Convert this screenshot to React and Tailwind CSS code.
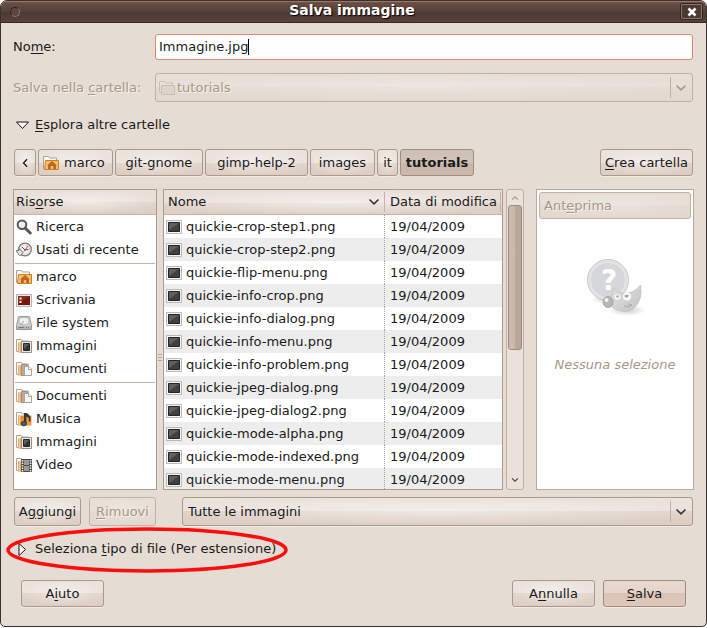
import React, { useState } from "react";

const raised =
  "rounded-[3px] border border-[#a89a8d] bg-[radial-gradient(ellipse_at_center,rgba(255,255,255,0.45),rgba(255,255,255,0)_75%),linear-gradient(#ebe2dc,#eae2dc_50%,#dfd4ca_50%,#ddcdc2)] shadow-[0_1px_0_#f1ebe5]";
const faded =
  "rounded-[3px] border border-[#bfb1a5] bg-[radial-gradient(ellipse_at_center,rgba(255,255,255,0.25),rgba(255,255,255,0)_75%),linear-gradient(#e7ded6,#e7dfd8_50%,#e3dad1_50%,#e2d8ce)] text-[#a89686] [text-shadow:1px_1px_0_#f6f2ee]";
const headerFill =
  "bg-[radial-gradient(ellipse_at_center,rgba(255,255,255,0.5),rgba(255,255,255,0)_75%),linear-gradient(#e9dfd9,#e8dfd9_50%,#e0d4cb_50%,#dccec3)]";

function Key({ children }) {
  return <span className="underline decoration-1 underline-offset-2">{children}</span>;
}

function Chevron({ className }) {
  return (
    <svg width="12" height="8" viewBox="0 0 12 8" className={className} fill="none" stroke="currentColor" strokeWidth="1.6">
      <path d="M1.500 1.500 6 5.800 10.500 1.500" />
    </svg>
  );
}

function FolderBase() {
  return (
    <>
      <path d="M.5 13.5V1.5H5.5L6.5 3H12.5V13.5Z" fill="#fbfaf8" stroke="#aaa6a0" />
      <path d="M2 4.500H12V14.500H2Z" fill="#e58f35" />
      <path d="M2.500 5H4.500V14H2.500Z" fill="#f8c98b" />
    </>
  );
}

function Icon({ name }) {
  return (
    <svg width="16" height="16" viewBox="0 0 16 16" className="shrink-0">
      {name === "search" && (
        <g fill="none" stroke="#555753">
          <circle cx="6" cy="5.8" r="4.3" fill="#eeeeec" strokeWidth="2" />
          <path d="M9.3 9.2 14.2 14" strokeWidth="3" strokeLinecap="round" />
          <path d="M3.6 5.5Q4 3.6 6 3.5" stroke="#fff" />
        </g>
      )}
      {name === "recent" && (
        <g fill="none">
          <circle cx="9" cy="7.5" r="6.3" fill="#f2f2f0" stroke="#77797a" strokeWidth="1.3" />
          <circle cx="9" cy="7.5" r="4.6" stroke="#b5b7b4" strokeDasharray="1 1.4" />
          <path d="M6 5 9 8 12.5 7.5" stroke="#555753" />
          <path d="M8 9.5 12 4" stroke="#df3b32" />
          <path d="M.5 8.5H3V6.5L7 10.5 4.5 14 3 12.5Q1 11.5.5 8.5Z" fill="#e4e5e3" stroke="#6d6f6c" />
        </g>
      )}
      {name === "home" && (
        <>
          <path d="M.5 13.5V1.5H5.5L6.5 3H13.5V13.5Z" fill="#fbfaf8" stroke="#a5a19b" />
          <path d="M2.5 5.5H15.5V14.5H1.5Z" fill="#f6bf69" stroke="#cd7c25" />
          <path d="M4 10.500 9 6 14 10.500H13V14H10.300V11H7.800V14H5V10.500Z" fill="#bf661c" />
        </>
      )}
      {name === "desktop" && (
        <>
          <path d="M.5 2.5H15.5V14.5H.5Z" fill="#ececea" stroke="#b5b5b3" />
          <path d="M2 4H14V13H2Z" fill="#75170d" />
          <path d="M2 4H14L2 12Z" fill="#a53a28" opacity=".55" />
          <path d="M3.5 5.5H5.5V7.5H3.5ZM3.5 9H5.5V11H3.5Z" fill="#fff" />
        </>
      )}
      {name === "disk" && (
        <>
          <path d="M2.500 1.500H13.500L15.500 10.500V14.500H.5V10.500Z" fill="#cfd0ce" stroke="#999b98" />
          <ellipse cx="8" cy="6" rx="5" ry="3.800" fill="#f0f0ef" stroke="#b9bbb8" />
          <path d="M8 6 4.5 10" stroke="#a0a29d" />
          <path d="M1 11H15V14H1Z" fill="#b6b8b5" />
          <path d="M2.500 12.500H8M10 12.500H11M12 12.500H13" stroke="#7b7d7a" />
        </>
      )}
      {name === "pictures" && (
        <>
          <FolderBase />
          <path d="M5.500 3.500H15.500V14.500H5.500Z" fill="#ececec" stroke="#8f918e" />
          <path d="M7.500 5.500H13.500V12.500H7.500Z" fill="#353735" stroke="#252725" />
          <path d="M8 6H13L8 11Z" fill="#5f615f" />
        </>
      )}
      {name === "documents" && (
        <>
          <FolderBase />
          <path d="M5.500 3.500H11V14.500H5.500Z" fill="#c4a39a" stroke="#97908b" />
          <path d="M8.500 5.500H13L15.500 8V14.500H8.500Z" fill="#f5f5f4" stroke="#a3a5a2" />
          <path d="M12.500 5.500V8.500H15.500" fill="#fff" stroke="#a3a5a2" />
        </>
      )}
      {name === "music" && (
        <>
          <FolderBase />
          <path d="M11 4.500H15.500V14.500H11Z" fill="#e99a43" />
          <path d="M8 2H10.500L14.500 5.500V10.500H12.800V7L10.300 5.500V12.500H8Z" fill="#353735" />
          <ellipse cx="7.800" cy="12.600" rx="2.700" ry="2.200" fill="#5a5c59" stroke="#2e3436" />
        </>
      )}
      {name === "video" && (
        <>
          <FolderBase />
          <path d="M5 2H16V15H5Z" fill="#4a4c49" />
          <path d="M8 3H13V8H8ZM8 9H13V14H8Z" fill="#999b98" />
          <path d="M6.500 3V14.500M14.500 3V14.500" stroke="#f3f3f3" strokeWidth="1.500" strokeDasharray="1.500 1" />
        </>
      )}
      {name === "image" && (
        <>
          <path d="M.5 1.5H15.5V14.5H.5Z" fill="#f5f5f5" stroke="#b8b8b8" />
          <path d="M2.5 3.5H13.5V12.5H2.5Z" fill="#3f413f" stroke="#222422" />
          <path d="M3 4H13L3 11Z" fill="#666866" opacity=".8" />
        </>
      )}
      {name === "folder" && (
        <>
          <path d="M.5 12.5V1.5H5.5L6.5 3H13.5V12.5Z" fill="#e9e1da" stroke="#c9beb4" />
          <path d="M2.5 5.5H15.5V14.5H2.5Z" fill="#ddd3ca" stroke="#c9beb4" />
        </>
      )}
    </svg>
  );
}

function GimpHelp() {
  return (
    <svg width="60" height="60" viewBox="0 0 60 60" aria-label="Anteprima non disponibile">
      <defs>
        <linearGradient id="wilber" x1="0" y1="0" x2="1" y2="1">
          <stop offset="0" stopColor="#e4e4e4" />
          <stop offset="1" stopColor="#c2c2c2" />
        </linearGradient>
        <radialGradient id="shade">
          <stop offset="0" stopColor="#000" stopOpacity=".2" />
          <stop offset="1" stopColor="#000" stopOpacity="0" />
        </radialGradient>
      </defs>
      <ellipse cx="23" cy="42" rx="17" ry="5" fill="url(#shade)" />
      <ellipse cx="42" cy="53" rx="19" ry="6" fill="url(#shade)" />
      <circle cx="23" cy="23" r="20.5" fill="#e1e3e4" stroke="#c5c7c8" />
      <circle cx="23" cy="23" r="17" fill="#d5d7d9" />
      <text x="24" y="33" textAnchor="middle" fill="#fff" className="font-['DejaVu_Sans'] text-[28px] font-bold">?</text>
      <path d="M28 31Q31 35 36 36Q48 38 55.500 28Q58 42 50 50Q44 56 36 54Q29 53 25 48L24 42Q28 40 28 31Z" fill="url(#wilber)" stroke="#bdbdbd" strokeWidth=".7" />
      <circle cx="32.500" cy="40" r="2.800" fill="#fafafa" />
      <circle cx="42" cy="39.500" r="4" fill="#fafafa" />
      <circle cx="32.500" cy="39.500" r="1.200" fill="#a2a2a2" />
      <path d="M39 39Q41 37 44 38.500L42 41Z" fill="#a2a2a2" />
      <path d="M39 49Q43 51 47 48L43 47" fill="none" stroke="#aaa" />
      <ellipse cx="23" cy="45" rx="5" ry="5.500" fill="#b5b5b5" stroke="#959595" strokeWidth=".7" />
      <circle cx="21.500" cy="43" r="2" fill="#f3f3f3" />
    </svg>
  );
}

const places = [
  ["search", "Ricerca"],
  ["recent", "Usati di recente"],
  null,
  ["home", "marco"],
  ["desktop", "Scrivania"],
  ["disk", "File system"],
  ["pictures", "Immagini"],
  ["documents", "Documenti"],
  null,
  ["documents", "Documenti"],
  ["music", "Musica"],
  ["pictures", "Immagini"],
  ["video", "Video"],
];

const files = [
  "quickie-crop-step1.png",
  "quickie-crop-step2.png",
  "quickie-flip-menu.png",
  "quickie-info-crop.png",
  "quickie-info-dialog.png",
  "quickie-info-menu.png",
  "quickie-info-problem.png",
  "quickie-jpeg-dialog.png",
  "quickie-jpeg-dialog2.png",
  "quickie-mode-alpha.png",
  "quickie-mode-indexed.png",
  "quickie-mode-menu.png",
];

const crumbs = [
  ["git-gnome", "w-[88px]"],
  ["gimp-help-2", "w-[103px]"],
  ["images", "w-[65px]"],
  ["it", "w-[21px]"],
];

export default function App() {
  const [name, setName] = useState("Immagine.jpg");

  return (
    <div className="overflow-hidden rounded-t-[7px] rounded-b-[5px] border border-[#3a302c] bg-[#e5dcd3] font-['DejaVu_Sans',sans-serif] text-[13px] leading-5 text-[#1a1a1a]">
      <header className="flex h-[22px] items-center border-b border-[#35281f] bg-[linear-gradient(#7e5f53,#6b4c41_10%,#54423a_50%,#4b3a32_55%,#5a4239)] pr-[3px] pl-[9px] shadow-[inset_0_1px_0_#94786c]">
        <button aria-label="Menu" className="size-[10px] rounded-full border border-[#2f2420] border-r-[#8b766d] border-b-[#8b766d] bg-[#5c463d]" />
        <h1 className="flex-1 pb-1 pl-1 text-center text-[14px] font-bold text-white [text-shadow:1px_1px_1px_#000]">Salva immagine</h1>
        <button aria-label="Chiudi" className="flex h-[17px] w-[23px] items-center justify-center rounded-[2px] border border-[#2f2420] bg-[#4b3a33] shadow-[inset_0_0_0_1px_#8b766d]">
          <svg width="10" height="10" viewBox="0 0 10 10" stroke="#fff" strokeWidth="2.600">
            <path d="M1.500 1.500 8.500 8.500M8.500 1.500 1.500 8.500" />
          </svg>
        </button>
      </header>

      <main className="px-3 pt-[11px] pb-[19px]">
        <div className="flex items-center">
          <label htmlFor="name" className="w-[142px] shrink-0">
            No<Key>m</Key>e:
          </label>
          <div className="mr-px flex h-[26px] min-w-0 flex-1 items-center rounded-[3px] border border-[#d2906f] bg-white px-[3px]">
            <input
              id="name"
              value={name}
              onChange={(e) => setName(e.target.value)}
              className="field-sizing-content h-4 max-w-full border-r border-black outline-none"
            />
          </div>
        </div>

        <div className="mt-[13px] flex items-center">
          <label htmlFor="folder" className="w-[142px] shrink-0 text-[#a89686] [text-shadow:1px_1px_0_#f6f2ee]">
            Salva nella <Key>c</Key>artella:
          </label>
          <div className="relative mr-px min-w-0 flex-1">
            <select id="folder" disabled className={`${faded} block h-[29px] w-full appearance-none pl-[21px] opacity-100`}>
              <option>tutorials</option>
            </select>
            <span className="pointer-events-none absolute inset-y-0 left-1 flex items-center">
              <Icon name="folder" />
            </span>
            <span className="pointer-events-none absolute inset-y-1 right-[6px] flex items-center border-l border-[#bfb1a5] pl-1 text-[#a89686]">
              <Chevron />
            </span>
          </div>
        </div>

        <button className="mt-[13px] flex h-5 items-center gap-[5px] pl-[2px]">
          <svg width="15" height="9" viewBox="0 0 15 9">
            <path d="M1.500 1H13.500L7.500 7.500Z" fill="#fff" stroke="#111" />
          </svg>
          <span>
            <Key>E</Key>splora altre cartelle
          </span>
        </button>

        <nav className="mt-[14px] flex h-[27px] gap-[2px] px-px">
          <button aria-label="Indietro" className={`${raised} flex w-[22px] items-center justify-center`}>
            <Chevron className="w-[10px] rotate-90" />
          </button>
          <button className={`${raised} flex w-[75px] items-center gap-[5px] pl-1`}>
            <Icon name="home" />
            marco
          </button>
          {crumbs.map(([text, width]) => (
            <button key={text} className={`${raised} ${width}`}>
              {text}
            </button>
          ))}
          <button className="w-[74px] rounded-[3px] border border-[#a08d80] bg-[linear-gradient(#cfc0b5,#d2c3b8_50%,#c8b7aa_50%,#c9b8ab)] font-bold">tutorials</button>
          <button className={`${raised} ml-auto w-[93px]`}>
            <Key>C</Key>rea cartella
          </button>
        </nav>

        <div className="mt-[13px] flex h-[301px]">
          <section className="w-36 shrink-0 border border-[#ad9a8c] bg-white">
            <h2 className={`${headerFill} h-[25px] border-b border-[#c7b3a4] pt-[2px] pl-[2px]`}>
              Ris<Key>o</Key>rse
            </h2>
            <ul>
              {places.map((place, i) =>
                place ? (
                  <li key={i} className="flex h-[23px] items-center gap-1 pl-[2px]">
                    <Icon name={place[0]} />
                    {place[1]}
                  </li>
                ) : (
                  <li key={i} className="mx-px flex h-1 items-center">
                    <hr className="w-full border-[#c7b3a4]" />
                  </li>
                )
              )}
            </ul>
          </section>

          <div className="flex w-[6px] shrink-0 flex-col items-center justify-center gap-[2px] pt-9">
            <i className="h-px w-1 bg-[#b5a698]" />
            <i className="h-px w-1 bg-[#b5a698]" />
            <i className="h-px w-1 bg-[#b5a698]" />
          </div>

          <section className="min-w-0 flex-1 overflow-hidden border border-[#ad9a8c] bg-white">
            <table className="w-full table-fixed border-separate border-spacing-0 text-left">
              <colgroup>
                <col />
                <col className="w-[117px]" />
              </colgroup>
              <thead className={headerFill}>
                <tr className="h-[25px]">
                  <th className="border-b border-[#c7b3a4] p-0 pl-1 font-normal">
                    <div className="flex items-center justify-between border-r border-[#c7b3a4] pr-1">
                      Nome
                      <Chevron className="text-[#333]" />
                    </div>
                  </th>
                  <th className="border-b border-[#c7b3a4] p-0 pr-px pl-[5px] font-normal whitespace-nowrap">
                    <div className="border-r border-[#c7b3a4]">Data di modifica</div>
                  </th>
                </tr>
              </thead>
              <tbody>
                {files.map((file) => (
                  <tr key={file} className="h-[23px] even:bg-[#ededed]">
                    <td className="border-r border-dotted border-[#a5a5a5] p-0 pl-[2px]">
                      <div className="flex items-center gap-1">
                        <Icon name="image" />
                        {file}
                      </div>
                    </td>
                    <td className="p-0 pl-[5px]">19/04/2009</td>
                  </tr>
                ))}
              </tbody>
            </table>
          </section>

          <div className="ml-[3px] flex w-[18px] shrink-0 flex-col items-center rounded-[3px] border border-[#bfb0a3] bg-[#e9e1da]">
            <button aria-label="Su" className="flex h-[15px] shrink-0 items-center text-[#a89686]">
              <Chevron className="w-2 rotate-180" />
            </button>
            <div className="h-[145px] w-[14px] rounded-[3px] border border-[#9d8b7e] bg-[linear-gradient(90deg,#cdbdb1,#c9b9ad_50%,#bba99c_50%,#b9a698)]" />
            <button aria-label="Giù" className="mt-auto flex h-[18px] shrink-0 items-center text-[#444]">
              <Chevron className="w-2" />
            </button>
          </div>

          <section className="ml-3 flex w-[158px] shrink-0 flex-col border border-[#b9a99c] bg-white p-[2px]">
            <button disabled className={`${faded} h-[27px] shrink-0 pl-1 text-left`}>
              Ant<Key>e</Key>prima
            </button>
            <div className="flex flex-col items-center gap-[38px] pt-[38px]">
              <GimpHelp />
              <p className="text-[#a89686] italic">Nessuna selezione</p>
            </div>
          </section>
        </div>

        <div className="mt-[7px] flex h-[29px] px-px">
          <button className={`${raised} w-[67px]`}>
            A<Key>g</Key>giungi
          </button>
          <button disabled className={`${faded} ml-2 w-[67px]`}>
            <Key>R</Key>imuovi
          </button>
          <div className="relative ml-[26px] min-w-0 flex-1">
            <select aria-label="Filtro" className={`${raised} block h-full w-full appearance-none pl-[5px]`}>
              <option>Tutte le immagini</option>
            </select>
            <span className="pointer-events-none absolute inset-y-1 right-[6px] flex items-center border-l border-[#bfb1a5] pl-1 text-[#333]">
              <Chevron />
            </span>
          </div>
        </div>

        <div className="relative mt-[13px] w-fit">
          <button className="flex h-5 items-center gap-2 pl-[5px]">
            <svg width="9" height="15" viewBox="0 0 9 15">
              <path d="M1 1.500V13.500L7.500 7.500Z" fill="#fff" stroke="#111" />
            </svg>
            <span>
              Seleziona <Key>t</Key>ipo di file (Per estensione)
            </span>
          </button>
          <svg width="284" height="48" viewBox="0 0 284 48" className="pointer-events-none absolute -top-[13px] -left-2 max-w-none">
            <ellipse cx="142" cy="24" rx="139" ry="21" fill="none" stroke="#fb0d0d" strokeWidth="3.500" />
          </svg>
        </div>

        <footer className="mt-[21px] flex h-[27px] gap-2 px-2">
          <button className={`${raised} mr-auto w-[83px]`}>
            A<Key>i</Key>uto
          </button>
          <button className={`${raised} w-[83px]`}>
            A<Key>n</Key>nulla
          </button>
          <button className="w-[83px] rounded-[3px] border border-[#9f8a7d] bg-[linear-gradient(#ead9cf,#e6d4ca_50%,#dbc3b5_50%,#dfc8ba)] shadow-[0_1px_0_#f1ebe5]">
            <Key>S</Key>alva
          </button>
        </footer>
      </main>
    </div>
  );
}
